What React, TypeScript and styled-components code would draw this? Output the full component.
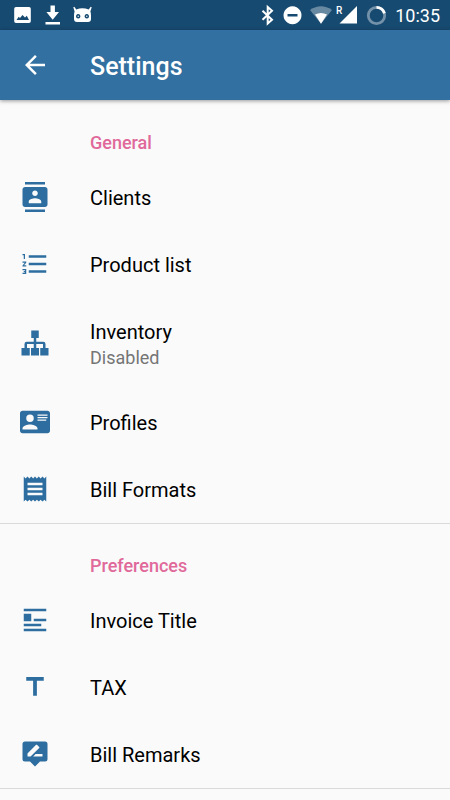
import React from "react";
import styled, { createGlobalStyle } from "styled-components";

const GlobalStyle = createGlobalStyle`
  * { box-sizing: border-box; }
  html, body, #root { min-height: 100%; }
  body {
    margin: 0;
    background: #fafafa;
    color: #000;
    font-family: Roboto, "Noto Sans", sans-serif;
  }
`;

const StatusBar = styled.div`
  display: flex;
  justify-content: space-between;
  align-items: center;
  height: 30px;
  padding: 0 10px 0 14px;
  background: #174a70;
  color: #fff;
`;

const StatusGroup = styled.div<{ $gap: number }>`
  display: flex;
  align-items: center;
  gap: ${(p) => p.$gap}px;
`;

const Time = styled.time`
  font-size: 18px;
  line-height: 30px;
  padding-top: 1px;
`;

const AppBar = styled.header`
  display: flex;
  align-items: center;
  height: 70px;
  padding: 0 20px;
  gap: 40px;
  background: #3170a0;
  color: #fff;
  box-shadow: 0 1px 4px rgba(0, 0, 0, 0.4);
`;

const BackButton = styled.button`
  display: flex;
  padding: 0;
  border: 0;
  background: none;
  color: inherit;
  cursor: pointer;
`;

const Title = styled.h1`
  margin: 0;
  padding-top: 3px;
  font-size: 25px;
  line-height: 32px;
  font-weight: 500;
`;

const Content = styled.main`
  padding-top: 1px;
`;

const Section = styled.section`
  border-bottom: 1px solid #dadada;
`;

const SectionTitle = styled.h2`
  margin: 0;
  padding: 30px 20px 9px 90px;
  color: #e0699a;
  font-size: 18px;
  line-height: 24px;
  font-weight: 500;
`;

const List = styled.ul`
  margin: 0;
  padding: 0;
  list-style: none;
`;

const RowButton = styled.button`
  display: flex;
  align-items: center;
  gap: 40px;
  width: 100%;
  padding: 0 20px 1px;
  border: 0;
  background: none;
  color: inherit;
  font-family: inherit;
  text-align: left;
  cursor: pointer;
`;

const RowText = styled.span`
  display: flex;
  flex-direction: column;
  padding: 21px 0 18px;
`;

const Label = styled.span`
  font-size: 20px;
  line-height: 27px;
`;

const Note = styled.span`
  color: #757575;
  font-size: 18px;
  line-height: 24px;
`;

const Icon = styled.svg.attrs({ viewBox: "0 0 24 24", "aria-hidden": true })`
  flex: none;
  width: 30px;
  height: 30px;
  fill: #2d6d9f;
`;

const BackIcon = styled(Icon)`
  fill: currentColor;
`;

const StatusIcon = styled.svg.attrs({ "aria-hidden": true })<{ $width: number }>`
  flex: none;
  width: ${(p) => p.$width}px;
  height: 30px;
  fill: currentColor;
`;

const icons = {
  contacts:
    "M20 0H4v2h16V0zM4 24h16v-2H4v2zM20 4H4c-1.1 0-2 .9-2 2v12c0 1.1.9 2 2 2h16c1.1 0 2-.9 2-2V6c0-1.1-.9-2-2-2zm-8 2.75c1.24 0 2.25 1.01 2.25 2.25s-1.01 2.25-2.25 2.25S9.75 10.24 9.75 9 10.76 6.75 12 6.75zM17 17H7v-1.5c0-1.67 3.33-2.5 5-2.5s5 .83 5 2.5V17z",
  numbered:
    "M2 17h2v.5H3v1h1v.5H2v1h3v-4H2v1zm1-9h1V4H2v1h1v3zm-1 3h1.8L2 13.1v.9h3v-1H3.2L5 10.9V10H2v1zm5-6v2h14V5H7zm0 14h14v-2H7v2zm0-6h14v-2H7v2z",
  sitemap:
    "M9 2h6v6h-2v3h5.6a1.8 1.8 0 0 1 1.8 1.8V16h2.4v6h-6.600v-6h2.200v-3.200H13V16h2.200v6H8.800v-6H11v-3.200H5.600V16h2.200v6H1.200v-6h2.400v-3.200A1.8 1.8 0 0 1 5.400 11H11V8H9z",
  card:
    "M2,3H22C23.05,3 24,3.95 24,5V19C24,20.05 23.05,21 22,21H2C0.95,21 0,20.05 0,19V5C0,3.95 0.95,3 2,3M14,6V7H22V6H14M14,8V9H22V8H14M14,10V11H21V10H14M8,13.91C6,13.91 2,15 2,17V18H14V17C14,15 10,13.91 8,13.91M8,6A3,3 0 0,0 5,9A3,3 0 0,0 8,12A3,3 0 0,0 11,9A3,3 0 0,0 8,6Z",
  receipt:
    "M18 17H6v-2h12v2zm0-4H6v-2h12v2zm0-4H6V7h12v2zM3 22l1.5-1.5L6 22l1.5-1.5L9 22l1.5-1.5L12 22l1.5-1.5L15 22l1.5-1.5L18 22l1.5-1.5L21 22V2l-1.5 1.5L18 2l-1.5 1.5L15 2l-1.5 1.5L12 2l-1.5 1.5L9 2 7.5 3.5 6 2 4.5 3.5 3 2v20z",
  floatLeft:
    "M3,7H9V13H3V7M3,3H21V5H3V3M21,11V13H11V11H21M3,15H17V17H3V15M3,19H21V21H3V19Z",
  title: "M5 4v3h5.5v12h3V7H19V4z",
  review:
    "M4 2h16a2 2 0 0 1 2 2v12a2 2 0 0 1-2 2h-4l-4 4-4-4H4a2 2 0 0 1-2-2V4a2 2 0 0 1 2-2zM6 14h2.47l6.88-6.87c.2-.2.2-.51 0-.71l-1.77-1.77c-.2-.2-.51-.2-.71 0L6 11.53V14zm12 0v-2h-5.5l-2 2H18z",
};

type Item = { icon: keyof typeof icons; label: string; note?: string };

const sections: { title: string; items: Item[] }[] = [
  {
    title: "General",
    items: [
      { icon: "contacts", label: "Clients" },
      { icon: "numbered", label: "Product list" },
      { icon: "sitemap", label: "Inventory", note: "Disabled" },
      { icon: "card", label: "Profiles" },
      { icon: "receipt", label: "Bill Formats" },
    ],
  },
  {
    title: "Preferences",
    items: [
      { icon: "floatLeft", label: "Invoice Title" },
      { icon: "title", label: "TAX" },
      { icon: "review", label: "Bill Remarks" },
    ],
  },
];

function Notifications() {
  return (
    <StatusGroup $gap={13}>
      <StatusIcon $width={18} viewBox="14 0 18 30">
        <path
          fillRule="evenodd"
          d="M16 7h13a1.800 1.800 0 0 1 1.800 1.800v12.400a1.800 1.800 0 0 1-1.800 1.800H16a1.800 1.800 0 0 1-1.800-1.800V8.800A1.800 1.800 0 0 1 16 7zM16.500 20h12.500l-2.200-4.200-1.800 1.700-2.500-2.500-2.500 3-1.300-1.300z"
        />
      </StatusIcon>
      <StatusIcon $width={15} viewBox="45 0 15 30">
        <path d="M50.500 5.500h4.400v6.500H59l-6.300 7.800-6.300-7.800h4.100zM45.500 22H60v2.400H45.500z" />
      </StatusIcon>
      <StatusIcon $width={19} viewBox="73 0 19 30">
        <path
          fillRule="evenodd"
          d="M73.300 7.200l1-.5 2 2.700q6-2.400 12.400 0l2-2.700 1 .5-1.300 4.300q.6 1.500.6 4v3.500q0 3-3 3H77q-3 0-3-3v-3.500q0-2.500.6-4zM78.200 14.100a2.200 2.200 0 1 0 .01 0zM86.800 14.100a2.200 2.200 0 1 0 .01 0z"
        />
        <circle cx="78.200" cy="16.300" r="0.700" />
        <circle cx="86.800" cy="16.300" r="0.700" />
      </StatusIcon>
    </StatusGroup>
  );
}

function SystemStatus() {
  return (
    <StatusGroup $gap={8}>
      <StatusIcon $width={15} viewBox="260 0 15 30">
        <path
          d="M262.500 10.800l9.500 9-4.300 3.700V7l4.300 3.800-9.500 9"
          fill="none"
          stroke="currentColor"
          strokeWidth="2"
        />
      </StatusIcon>
      <StatusIcon $width={19} viewBox="283 0 19 30">
        <path
          fillRule="evenodd"
          d="M292.500 6.300a9 9 0 1 0 .01 0zM287.500 14.100h10v2.400h-10z"
        />
      </StatusIcon>
      <StatusGroup $gap={4}>
        <StatusIcon $width={22} viewBox="310 0 22 30">
          <path d="M310 10q11-7.500 22 0l-11 13.800z" opacity="0.350" />
          <path d="M315 14.600q6-3.200 12 0l-6 9.200z" />
        </StatusIcon>
        <StatusIcon $width={22} viewBox="336 0 22 30">
          <path d="M357 6v17.500h-17.500z" />
          <text x="336" y="14" fontSize="10" fontWeight="500">
            R
          </text>
        </StatusIcon>
      </StatusGroup>
      <StatusIcon $width={21} viewBox="366 0 21 30">
        <circle
          cx="376.500"
          cy="15.500"
          r="8.200"
          fill="none"
          stroke="currentColor"
          strokeWidth="2.800"
          opacity="0.400"
        />
        <path
          d="M376.500 7.300a8.200 8.200 0 0 1 7.900 6"
          fill="none"
          stroke="currentColor"
          strokeWidth="2.800"
        />
      </StatusIcon>
      <Time>10:35</Time>
    </StatusGroup>
  );
}

export default function App() {
  return (
    <>
      <GlobalStyle />
      <StatusBar>
        <Notifications />
        <SystemStatus />
      </StatusBar>
      <AppBar>
        <BackButton type="button" aria-label="Back">
          <BackIcon>
            <path d="M20 11H7.830l5.590-5.590L12 4l-8 8 8 8 1.410-1.410L7.830 13H20v-2z" />
          </BackIcon>
        </BackButton>
        <Title>Settings</Title>
      </AppBar>
      <Content>
        {sections.map((section) => (
          <Section key={section.title}>
            <SectionTitle>{section.title}</SectionTitle>
            <List>
              {section.items.map((item) => (
                <li key={item.label}>
                  <RowButton type="button">
                    <Icon>
                      <path fillRule="evenodd" d={icons[item.icon]} />
                    </Icon>
                    <RowText>
                      <Label>{item.label}</Label>
                      {item.note && <Note>{item.note}</Note>}
                    </RowText>
                  </RowButton>
                </li>
              ))}
            </List>
          </Section>
        ))}
      </Content>
    </>
  );
}
